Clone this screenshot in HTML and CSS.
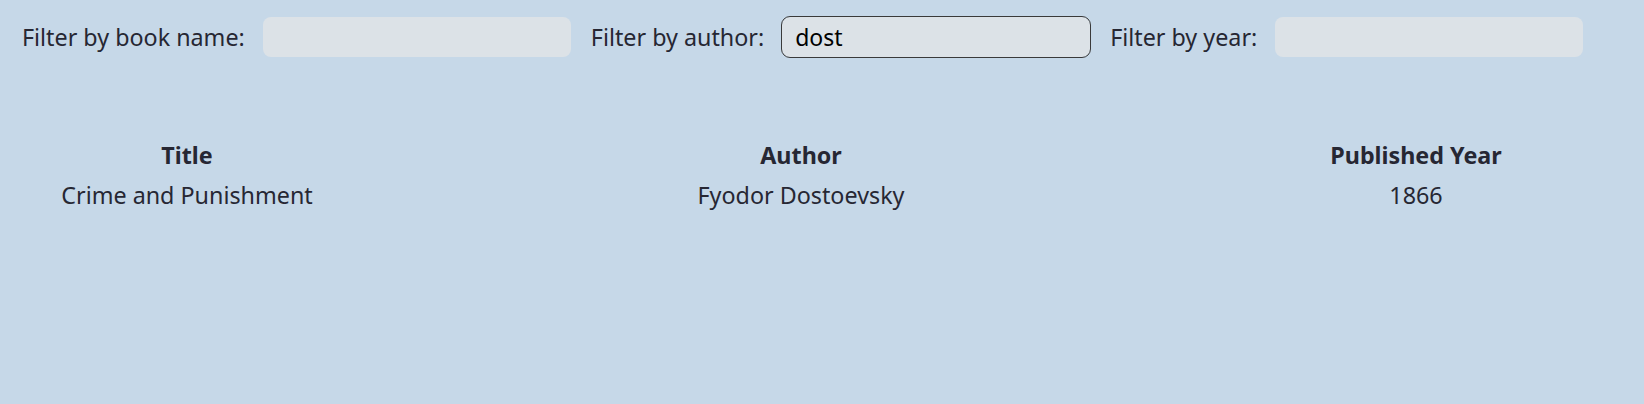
FILE: index.html
```html
<!DOCTYPE html>
<html lang="en">
<head>
<meta charset="utf-8">
<title>Books</title>
<link rel="stylesheet" href="styles.css">
</head>
<body>
<div class="app">
  <div class="filters">
    <div class="filter">
      <label class="filter-label" for="f-name">Filter by book name:</label>
      <input class="filter-input" id="f-name" type="text" value="">
    </div>
    <div class="filter">
      <label class="filter-label" for="f-author">Filter by author:</label>
      <input class="filter-input filter-input--active" id="f-author" type="text" value="dost">
    </div>
    <div class="filter">
      <label class="filter-label" for="f-year">Filter by year:</label>
      <input class="filter-input" id="f-year" type="text" value="">
    </div>
  </div>
  <table class="books">
    <colgroup>
      <col class="col-title">
      <col class="col-author">
      <col class="col-year">
    </colgroup>
    <thead>
      <tr><th>Title</th><th>Author</th><th>Published Year</th></tr>
    </thead>
    <tbody>
      <tr><td>Crime and Punishment</td><td>Fyodor Dostoevsky</td><td>1866</td></tr>
    </tbody>
  </table>
</div>
</body>
</html>
```

FILE: styles.css
```css
html, body {
  margin: 0;
  padding: 0;
  background: #c6d8e8;
}

body {
  font-family: "Noto Sans", "Liberation Sans", sans-serif;
  font-size: 23.3px;
  color: #262733;
}

.app {
  padding: 17px 0 0 22px;
}

.filters {
  display: flex;
  align-items: center;
}

.filter {
  display: flex;
  align-items: center;
  gap: 18px;
  margin-right: 20px;
}

.filter-label {
  white-space: nowrap;
}

.filter-input {
  box-sizing: border-box;
  width: 308px;
  height: 40px;
  padding: 0 13px;
  border: none;
  border-radius: 8px;
  background: #dce2e7;
  font-family: inherit;
  font-size: 23px;
  color: #000;
  outline: none;
}

.filter-input--active {
  outline: 1px solid #3a3a3a;
  outline-offset: 0;
}

.books {
  margin: 78px 0 0 -14px;
  border-spacing: 0;
  table-layout: fixed;
  width: 1588px;
}

.col-title { width: 358px; }
.col-author { width: 870px; }
.col-year { width: 360px; }

.books th,
.books td {
  text-align: center;
  padding: 2px 0;
  line-height: 36px;
}

.books th {
  font-weight: 700;
}
```
